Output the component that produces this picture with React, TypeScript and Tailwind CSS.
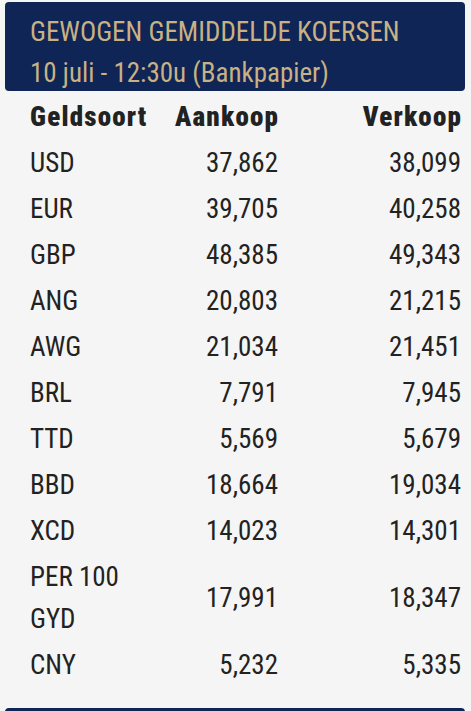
import React from "react";

const rows: [string, string, string][] = [
  ["USD", "37,862", "38,099"],
  ["EUR", "39,705", "40,258"],
  ["GBP", "48,385", "49,343"],
  ["ANG", "20,803", "21,215"],
  ["AWG", "21,034", "21,451"],
  ["BRL", "7,791", "7,945"],
  ["TTD", "5,569", "5,679"],
  ["BBD", "18,664", "19,034"],
  ["XCD", "14,023", "14,301"],
  ["PER 100 GYD", "17,991", "18,347"],
  ["CNY", "5,232", "5,335"],
];

export default function App() {
  return (
    <div
      className="w-[471px] h-[711px] overflow-hidden bg-[#f5f5f5] text-[#222222]"
      style={{ fontFamily: '"Roboto Condensed", "Liberation Sans Narrow", Roboto, sans-serif' }}
    >
      <div className="pt-[2px] px-[5px] pr-[6px]">
        <div className="bg-[#0e2556] rounded-[4px] h-[89px] pl-[25px] pt-[10px] text-[#c9b184] text-[27px] leading-[41px]">
          <div>GEWOGEN GEMIDDELDE KOERSEN</div>
          <div>10 juli - 12:30u (Bankpapier)</div>
        </div>
      </div>
      <div className="pt-[3px] pl-[30px] pr-[10px]">
        <div className="grid grid-cols-[130px_118px_1fr] items-center font-black tracking-[1.2px] text-[27px] leading-[42px] py-[2px]">
          <div>Geldsoort</div>
          <div className="text-right mr-[-1px]">Aankoop</div>
          <div className="text-right mr-[-1px]">Verkoop</div>
        </div>
        {rows.map(([c, a, v]) => (
          <div
            key={c}
            className="grid grid-cols-[130px_118px_1fr] items-center text-[27px] leading-[42px] py-[2px]"
          >
            <div className={c.length > 4 ? "w-[100px]" : ""}>{c}</div>
            <div className="text-right">{a}</div>
            <div className="text-right">{v}</div>
          </div>
        ))}
      </div>
      <div className="px-[5px] pr-[6px] mt-[20px]">
        <div className="bg-[#0e2556] rounded-t-[4px] h-[20px]" />
      </div>
    </div>
  );
}
